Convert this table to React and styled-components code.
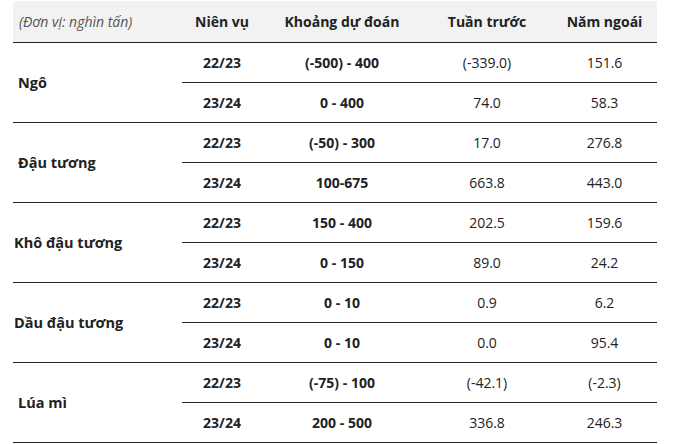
import React from "react";
import styled, { createGlobalStyle } from "styled-components";

const GlobalStyle = createGlobalStyle`
  body {
    margin: 0;
    background: #fff;
    font-family: "Open Sans", "Noto Sans", sans-serif;
    color: #222;
  }
`;

const Table = styled.table`
  margin: 1px 0 0 13px;
  width: 644px;
  border-collapse: collapse;
  table-layout: fixed;
  font-size: 14px;
`;

const HeadCell = styled.th`
  height: 41px;
  padding: 0;
  background: #f2f2f2;
  border-bottom: 1px solid #222;
  font-weight: 700;
  text-align: center;
`;

const UnitCell = styled(HeadCell)`
  text-align: left;
  padding-left: 6px;
  font-weight: 400;
  font-style: italic;
  color: #555;
`;

const Cell = styled.td`
  height: 39px;
  padding: 0;
  border-bottom: 1px solid #222;
  text-align: center;
  font-weight: ${(p) => (p.$bold ? 700 : 400)};
`;

const Label = styled.td`
  padding: 0 0 0 ${(p) => p.$indent}px;
  border-bottom: 1px solid #222;
  font-weight: 700;
  font-size: 14.5px;
  text-align: left;
  white-space: nowrap;
`;

const groups = [
  { name: "Ngô", indent: 5, rows: [["22/23", "(-500) - 400", "(-339.0)", "151.6"], ["23/24", "0 - 400", "74.0", "58.3"]] },
  { name: "Đậu tương", indent: 5, rows: [["22/23", "(-50) - 300", "17.0", "276.8"], ["23/24", "100-675", "663.8", "443.0"]] },
  { name: "Khô đậu tương", indent: 1, rows: [["22/23", "150 - 400", "202.5", "159.6"], ["23/24", "0 - 150", "89.0", "24.2"]] },
  { name: "Dầu đậu tương", indent: 1, rows: [["22/23", "0 - 10", "0.9", "6.2"], ["23/24", "0 - 10", "0.0", "95.4"]] },
  { name: "Lúa mì", indent: 5, rows: [["22/23", "(-75) - 100", "(-42.1)", "(-2.3)"], ["23/24", "200 - 500", "336.8", "246.3"]] },
];

export default function App() {
  return (
    <>
      <GlobalStyle />
      <Table>
        <colgroup>
          <col style={{ width: 169 }} />
          <col style={{ width: 80 }} />
          <col style={{ width: 160 }} />
          <col style={{ width: 130 }} />
          <col style={{ width: 105 }} />
        </colgroup>
        <thead>
          <tr>
            <UnitCell>(Đơn vị: nghìn tấn)</UnitCell>
            <HeadCell>Niên vụ</HeadCell>
            <HeadCell>Khoảng dự đoán</HeadCell>
            <HeadCell>Tuần trước</HeadCell>
            <HeadCell>Năm ngoái</HeadCell>
          </tr>
        </thead>
        <tbody>
          {groups.map((g) =>
            g.rows.map((r, i) => (
              <tr key={g.name + i}>
                {i === 0 && (
                  <Label rowSpan={2} $indent={g.indent}>
                    {g.name}
                  </Label>
                )}
                <Cell $bold>{r[0]}</Cell>
                <Cell $bold>{r[1]}</Cell>
                <Cell>{r[2]}</Cell>
                <Cell>{r[3]}</Cell>
              </tr>
            ))
          )}
        </tbody>
      </Table>
    </>
  );
}
